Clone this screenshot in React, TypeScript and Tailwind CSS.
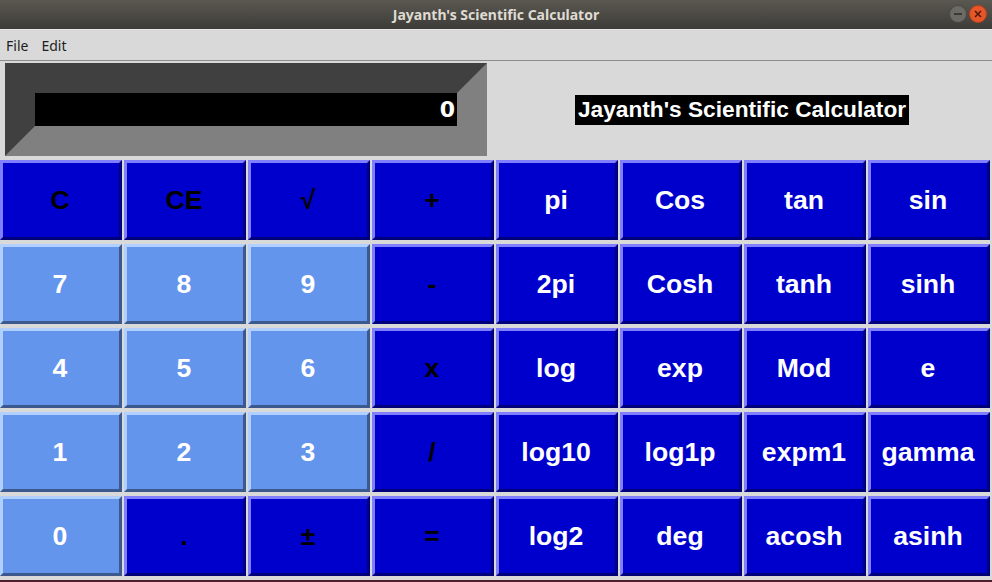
import React from "react";

type B = { t: string; light?: boolean; black?: boolean };

const rows: B[][] = [
  [{ t: "C", black: true }, { t: "CE", black: true }, { t: "√", black: true }, { t: "+", black: true }, { t: "pi" }, { t: "Cos" }, { t: "tan" }, { t: "sin" }],
  [{ t: "7", light: true }, { t: "8", light: true }, { t: "9", light: true }, { t: "-", black: true }, { t: "2pi" }, { t: "Cosh" }, { t: "tanh" }, { t: "sinh" }],
  [{ t: "4", light: true }, { t: "5", light: true }, { t: "6", light: true }, { t: "x", black: true }, { t: "log" }, { t: "exp" }, { t: "Mod" }, { t: "e" }],
  [{ t: "1", light: true }, { t: "2", light: true }, { t: "3", light: true }, { t: "/", black: true }, { t: "log10" }, { t: "log1p" }, { t: "expm1" }, { t: "gamma" }],
  [{ t: "0", light: true }, { t: ".", black: true }, { t: "±", black: true }, { t: "=", black: true }, { t: "log2" }, { t: "deg" }, { t: "acosh" }, { t: "asinh" }],
];

function Btn({ b }: { b: B }) {
  const base =
    "h-[80px] w-[122px] border-[3px] flex items-center justify-center pr-[2px] font-bold text-[26.6px] leading-none select-none";
  const colors = b.light
    ? "bg-[#6495ed] border-t-[#b1d0ff] border-l-[#b1d0ff] border-b-[#3c598e] border-r-[#3c598e]"
    : "bg-[#0000cd] border-t-[#7f7fff] border-l-[#7f7fff] border-b-[#00007b] border-r-[#00007b]";
  const text = b.black ? "text-black" : "text-white";
  return (
    <div className={`${base} ${colors} ${text}`} style={{ fontFamily: '"Liberation Sans", Arial, sans-serif' }}>
      {b.t}
    </div>
  );
}

export default function App() {
  return (
    <div className="w-[992px] h-[582px] bg-[#d9d9d9] flex flex-col overflow-hidden">
      {/* Title bar */}
      <div className="relative h-[29px] bg-gradient-to-b from-[#5b5852] to-[#3d3c38] flex items-center justify-center">
        <span
          className="text-[#dfdbd2] font-bold text-[14px]"
          style={{ fontFamily: '"Noto Sans", "DejaVu Sans", sans-serif' }}
        >
          Jayanth's Scientific Calculator
        </span>
        <div className="absolute right-[5px] top-[5px] flex gap-[2px]">
          <div className="w-[18px] h-[18px] rounded-full bg-[#6c6a65] border border-[#4a4844] flex items-center justify-center">
            <div className="w-[8px] h-[2px] bg-[#3a3935]" />
          </div>
          <div className="w-[18px] h-[18px] rounded-full bg-[#e65628] border border-[#b8401b] flex items-center justify-center">
            <svg width="8" height="8" viewBox="0 0 8 8">
              <path d="M1 1L7 7M7 1L1 7" stroke="#4a1a0c" strokeWidth="1.5" />
            </svg>
          </div>
        </div>
      </div>
      <div className="h-[1px] bg-[#e8e8e6]" />
      {/* Menu bar */}
      <div
        className="h-[31px] flex items-center gap-[13px] pl-[6px] text-[14px] text-[#1e1e1e] border-b border-[#8c8c8c]"
        style={{ fontFamily: '"Noto Sans", "DejaVu Sans", sans-serif' }}
      >
        <span>File</span>
        <span>Edit</span>
      </div>
      {/* Display row */}
      <div className="flex items-center mt-[2px]">
        <div className="ml-[5px] w-[482px] h-[93px] border-[30px] border-t-[#404040] border-l-[#404040] border-b-[#808080] border-r-[#808080] bg-black flex items-center justify-end pr-[2px]">
          <span
            className="text-white font-bold text-[22px] leading-none"
            style={{ fontFamily: '"DejaVu Sans", sans-serif' }}
          >
            0
          </span>
        </div>
        <div className="flex-1 flex justify-center pl-[5px]">
          <div
            className="bg-black text-white font-bold text-[22.7px] h-[30px] px-[3px] flex items-center"
            style={{ fontFamily: '"Liberation Sans", Arial, sans-serif' }}
          >
            Jayanth's Scientific Calculator
          </div>
        </div>
      </div>
      {/* Buttons */}
      <div className="mt-[4px] flex flex-col gap-[4px]">
        {rows.map((r, i) => (
          <div key={i} className="flex gap-[2px]">
            {r.map((b, j) => (
              <Btn key={j} b={b} />
            ))}
          </div>
        ))}
      </div>
      <div className="mt-auto h-[2px] bg-[#4d1e2c]" />
    </div>
  );
}
